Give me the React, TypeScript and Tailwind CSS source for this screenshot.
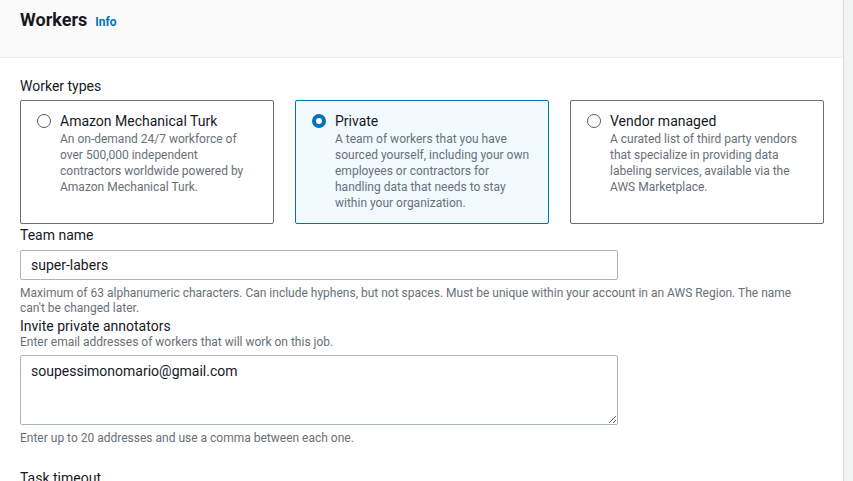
import { useState } from 'react';

const options = [
  {
    id: 'mturk',
    title: 'Amazon Mechanical Turk',
    desc: 'An on-demand 24/7 workforce of over 500,000 independent contractors worldwide powered by Amazon Mechanical Turk.',
  },
  {
    id: 'private',
    title: 'Private',
    desc: 'A team of workers that you have sourced yourself, including your own employees or contractors for handling data that needs to stay within your organization.',
  },
  {
    id: 'vendor',
    title: 'Vendor managed',
    desc: 'A curated list of third party vendors that specialize in providing data labeling services, available via the AWS Marketplace.',
  },
];

export default function App() {
  const [type, setType] = useState('private');
  const [team, setTeam] = useState('super-labers');
  const [emails, setEmails] = useState('soupessimonomario@gmail.com');

  return (
    <div className="flex h-[481px] overflow-hidden bg-[#f2f3f3] text-[#16191f]" style={{ fontFamily: 'Roboto, "Liberation Sans", sans-serif' }}>
      <div className="w-[844px] shrink-0 bg-white border-r border-[#d5dbdb]">
        {/* header */}
        <div className="h-[58px] bg-[#fafafa] border-b border-[#eaeded] px-5 pt-[9px]">
          <h2 className="flex items-baseline gap-2 text-[18px] font-bold leading-[22px]">
            Workers
            <span className="text-[12px] font-bold text-[#0073bb]">Info</span>
          </h2>
        </div>

        <div className="px-5 pt-[19px]">
          {/* 작업자 유형 */}
          <div className="text-[14px] leading-[18px]">Worker types</div>
          <div className="mt-[5px] grid grid-cols-3 gap-[21px] w-[804px]">
            {options.map(o => {
              const sel = type === o.id;
              return (
                <label
                  key={o.id}
                  onClick={() => setType(o.id)}
                  className={`flex gap-[9px] h-[124px] rounded-[2px] border pl-4 pr-3 pt-[11px] cursor-pointer ${sel ? 'bg-[#f1faff] border-[#0073bb]' : 'bg-white border-[#687078]'}`}
                >
                  <span className={`mt-[2px] w-[14px] h-[14px] shrink-0 rounded-full ${sel ? 'border-[4px] border-[#0073bb] bg-white' : 'border border-[#545b64] bg-white'}`} />
                  <span>
                    <span className="block text-[14px] leading-[18px]">{o.title}</span>
                    <span className="block text-[12px] leading-[16px] text-[#687078] mt-[1px]">{o.desc}</span>
                  </span>
                </label>
              );
            })}
          </div>

          {/* 팀 이름 */}
          <div className="mt-[2px] text-[14px] leading-[18px]">Team name</div>
          <input
            value={team}
            onChange={e => setTeam(e.target.value)}
            className="mt-[6px] block w-[598px] h-[30px] px-[10px] text-[14px] border border-[#aab7b8] rounded-[2px] outline-none"
          />
          <p className="mt-[6px] text-[12px] leading-[15px] text-[#687078] w-[790px]">
            Maximum of 63 alphanumeric characters. Can include hyphens, but not spaces. Must be unique within your account in an AWS Region. The name can't be changed later.
          </p>

          {/* 초대 */}
          <div className="mt-[1px] text-[14px] leading-[18px]">Invite private annotators</div>
          <p className="text-[12px] leading-[15px] text-[#687078]">Enter email addresses of workers that will work on this job.</p>
          <textarea
            value={emails}
            onChange={e => setEmails(e.target.value)}
            className="mt-[5px] block w-[598px] h-[70px] px-[10px] py-[4px] text-[14px] leading-[22px] border border-[#aab7b8] rounded-[2px] outline-none"
          />
          <p className="mt-[6px] text-[12px] leading-[15px] text-[#687078]">Enter up to 20 addresses and use a comma between each one.</p>

          <div className="mt-[23px] text-[14px] leading-[18px]">Task timeout</div>
        </div>
      </div>
    </div>
  );
}
